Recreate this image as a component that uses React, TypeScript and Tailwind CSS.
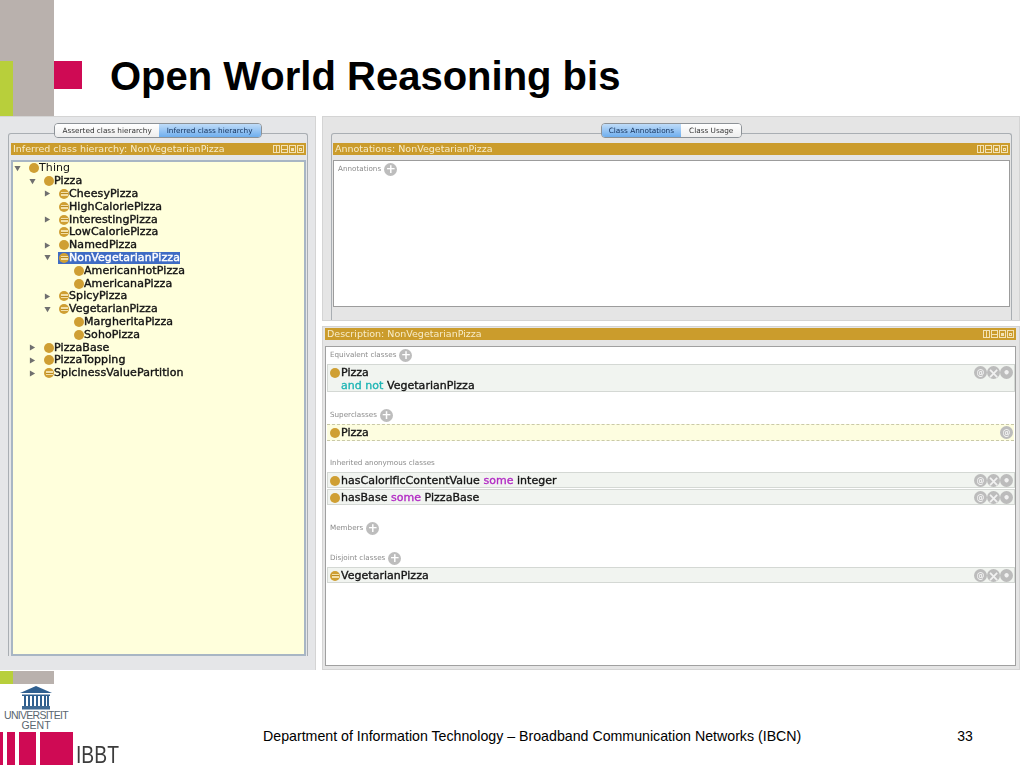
import React from "react";

const UI = "font-['DejaVu_Sans',sans-serif]";

function ClassIcon({ equiv = false }: { equiv?: boolean }) {
  return (
    <span className="relative flex h-[10px] w-[10px] shrink-0 items-center justify-center rounded-full bg-[#cf9f33]">
      {equiv && (
        <span className="flex h-[4px] w-[7px] items-center bg-[#f2dfa8]">
          <span className="h-[1px] w-full bg-[#b98a20]" />
        </span>
      )}
    </span>
  );
}

function Arrow({ dir }: { dir: "right" | "down" }) {
  return (
    <svg width="7" height="7" viewBox="0 0 8 8" className="shrink-0">
      {dir === "right" ? <path d="M1 0.5 L7 4 L1 7.5 Z" fill="#6f6f6f" /> : <path d="M0.5 1 L7.5 1 L4 7 Z" fill="#6f6f6f" />}
    </svg>
  );
}

type Node = { t: string; l: number; a?: "right" | "down"; e?: boolean; sel?: boolean; thin?: boolean };
const tree: Node[] = [
  { t: "Thing", l: 0, a: "down", thin: true },
  { t: "Pizza", l: 1, a: "down" },
  { t: "CheesyPizza", l: 2, a: "right", e: true },
  { t: "HighCaloriePizza", l: 2, e: true },
  { t: "InterestingPizza", l: 2, a: "right", e: true },
  { t: "LowCaloriePizza", l: 2, e: true },
  { t: "NamedPizza", l: 2, a: "right" },
  { t: "NonVegetarianPizza", l: 2, a: "down", e: true, sel: true },
  { t: "AmericanHotPizza", l: 3 },
  { t: "AmericanaPizza", l: 3 },
  { t: "SpicyPizza", l: 2, a: "right", e: true },
  { t: "VegetarianPizza", l: 2, a: "down", e: true },
  { t: "MargheritaPizza", l: 3 },
  { t: "SohoPizza", l: 3 },
  { t: "PizzaBase", l: 1, a: "right" },
  { t: "PizzaTopping", l: 1, a: "right" },
  { t: "SpicinessValuePartition", l: 1, a: "right", e: true },
];

const indent: Record<number, string> = { 0: "pl-[1px]", 1: "pl-[16px]", 2: "pl-[31px]", 3: "pl-[46px]" };

function TreeRow({ n }: { n: Node }) {
  return (
    <div className={`flex h-[12.8px] items-center ${indent[n.l]}`}>
      <span className="flex w-[11px] shrink-0 items-center">{n.a && <Arrow dir={n.a} />}</span>
      <span className={`flex items-center ${n.sel ? "ml-[3px] bg-[#3f6cc4] pl-[1px] text-white" : "ml-[4px] text-[#141414]"}`}>
        <ClassIcon equiv={n.e} />
        <span className={`text-[11px] leading-[12px] tracking-[0.1px] ${n.thin ? "font-normal" : "[-webkit-text-stroke:0.4px_currentColor]"}`}>{n.t}</span>
      </span>
    </div>
  );
}

function ViewButtons() {
  return (
    <span className="flex gap-[1px]">
      {[0, 1, 2, 3].map((i) => (
        <span key={i} className="flex h-[8px] w-[7px] items-center justify-center border border-[#f3e2b4]">
          {i === 0 && <span className="h-full w-[1px] bg-[#f3e2b4]" />}
          {i === 1 && <span className="h-[1px] w-full bg-[#f3e2b4]" />}
          {i === 2 && <span className="h-[3px] w-[3px] bg-[#f3e2b4]" />}
          {i === 3 && <span className="h-[3px] w-[3px] border border-[#f3e2b4]" />}
        </span>
      ))}
    </span>
  );
}

function GoldBar({ title }: { title: string }) {
  return (
    <div className="flex h-[12px] shrink-0 items-center justify-between bg-[#cb9c2c] pl-[2px] pr-[2px]">
      <span className="text-[9.5px] leading-[12px] text-[#f7ecc9]">{title}</span>
      <ViewButtons />
    </div>
  );
}

function Tabs({ a, b, active }: { a: string; b: string; active: 0 | 1 }) {
  const on = "bg-gradient-to-b from-[#bfdcf8] to-[#6eaeee] text-[#12305a]";
  const off = "bg-gradient-to-b from-[#ffffff] to-[#eeeeee] text-[#333333]";
  return (
    <div className="relative z-10 mx-auto flex h-[15px] w-fit overflow-hidden rounded-[4px] border border-[#8d9297] text-[7.3px] leading-[13px]">
      <span className={`px-[7px] ${active === 0 ? on : off}`}>{a}</span>
      <span className={`px-[8px] ${active === 1 ? on : off}`}>{b}</span>
    </div>
  );
}

function PlusLabel({ label }: { label: string }) {
  return (
    <div className="flex h-[14px] items-center gap-[3px] pl-[4px]">
      <span className="text-[7.2px] text-[#8b8b8b]">{label}</span>
      <span className="flex h-[13px] w-[13px] items-center justify-center rounded-full bg-[#bdbdbd] text-[12px] font-bold leading-none text-white">+</span>
    </div>
  );
}

function Btn({ g, size }: { g: string; size: string }) {
  return (
    <span className={`flex h-[13px] w-[13px] items-center justify-center rounded-full bg-[#bcbcbc] font-bold leading-none text-[#f1f1f1] ${size}`}>{g}</span>
  );
}

function RowText({ parts }: { parts: [string, string?][] }) {
  return (
    <span className="whitespace-pre pl-[1px] text-[11px] leading-[13px] tracking-[0.03px] text-[#141414] [-webkit-text-stroke:0.35px_currentColor]">
      {parts.map(([t, c], i) => (
        <span key={i} className={c}>{t}</span>
      ))}
    </span>
  );
}

function FrameRow({ children, two, equiv }: { children: React.ReactNode; two?: React.ReactNode; equiv?: boolean }) {
  return (
    <div className="ml-[1px] flex items-start justify-between border border-[#d4d8d4] bg-[#f1f4f0] pl-[2px] pr-[1px] pt-[1px]">
      <div className="flex flex-col">
        <div className="flex h-[13px] items-center">
          <ClassIcon equiv={equiv} />
          {children}
        </div>
        {two && <div className="flex h-[12px] items-center pl-[10px]">{two}</div>}
      </div>
      <span className="flex">
        <Btn g="@" size="text-[8px]" />
        <Btn g="×" size="text-[14px]" />
        <Btn g="•" size="text-[12px]" />
      </span>
    </div>
  );
}

export default function App() {
  return (
    <div className="flex h-[768px] w-[1024px] flex-col overflow-hidden bg-white font-['Liberation_Sans',sans-serif]">
      {/* Slide title */}
      <header className="flex h-[116px] shrink-0">
        <div className="flex w-[54px] flex-col justify-end bg-[#b9b1ad]">
          <div className="h-[55px] w-[13px] bg-[#b8cf3b]" />
        </div>
        <div className="mt-[61px] h-[28px] w-[28px] bg-[#cf0a54]" />
        <h1 className="ml-[28px] mt-[53px] text-[40px] font-bold leading-[46px] text-black">Open World Reasoning bis</h1>
      </header>

      {/* Application screenshot */}
      <main className={`flex h-[554px] shrink-0 gap-[6px] bg-white blur-[0.35px] ${UI}`}>
        <section className="flex w-[316px] flex-col border-r border-t border-[#d4d4d4] bg-[#e5e6e8] pl-[8px] pr-[7px] pt-[6px]">
          <div className="-mb-[5px]">
            <Tabs a="Asserted class hierarchy" b="Inferred class hierarchy" active={1} />
          </div>
          <div className="flex h-[523px] flex-col rounded-t-[3px] border-x border-t border-[#a9aeb3] pl-[2px] pr-[1px] pt-[9px]">
            <GoldBar title="Inferred class hierarchy: NonVegetarianPizza" />
            <div className="mt-[5px] flex-1 border-2 border-[#a8b6c4] bg-[#ffffdc]">
              {tree.map((n) => (
                <TreeRow key={n.t} n={n} />
              ))}
            </div>
          </div>
        </section>

        <section className="flex flex-1 flex-col pr-[4px]">
          <div className="flex h-[205px] shrink-0 flex-col border border-[#d4d4d4] bg-[#e5e5e5] pl-[8px] pr-[7px] pt-[6px]">
            <div className="-mb-[5px]">
              <Tabs a="Class Annotations" b="Class Usage" active={0} />
            </div>
            <div className="flex flex-1 flex-col rounded-t-[3px] border-x border-t border-[#a9aeb3] px-[1px] pt-[9px]">
              <GoldBar title="Annotations: NonVegetarianPizza" />
              <div className="mb-[13px] mt-[5px] flex-1 border border-[#9c9c9c] bg-white pt-[1px]">
                <PlusLabel label="Annotations" />
              </div>
            </div>
          </div>

          <div className="mt-[5px] flex flex-1 flex-col border border-[#d4d4d4] bg-[#e5e5e5] pb-[3px] pl-[2px] pr-[3px] pt-[1px]">
            <GoldBar title="Description: NonVegetarianPizza" />
            <div className="mt-[6px] flex-1 border border-[#a0a0a0] bg-white pt-[1px]">
              <PlusLabel label="Equivalent classes" />
              <div className="mt-[2px]">
                <FrameRow two={<RowText parts={[["and not ", "text-[#1fb5b5]"], ["VegetarianPizza"]]} />}>
                  <RowText parts={[["Pizza"]]} />
                </FrameRow>
              </div>
              <div className="mt-[16px]">
                <PlusLabel label="Superclasses" />
              </div>
              <div className="mx-[1px] mt-[2px] flex h-[17px] items-center justify-between border-y border-dashed border-[#c9c9a8] bg-[#fdfde0] pl-[3px]">
                <span className="flex items-center">
                  <ClassIcon />
                  <RowText parts={[["Pizza"]]} />
                </span>
                <span className="flex pr-[1px]">
                  <Btn g="@" size="text-[8px]" />
                </span>
              </div>
              <div className="mt-[15px]">
                <div className="flex h-[14px] items-center pl-[4px] text-[7.2px] text-[#8b8b8b]">Inherited anonymous classes</div>
              </div>
              <div className="mt-[2px]">
                <FrameRow>
                  <RowText parts={[["hasCalorificContentValue "], ["some ", "text-[#b22bc4]"], ["integer"]]} />
                </FrameRow>
              </div>
              <div className="mt-[1px]">
                <FrameRow>
                  <RowText parts={[["hasBase "], ["some ", "text-[#b22bc4]"], ["PizzaBase"]]} />
                </FrameRow>
              </div>
              <div className="mt-[16px]">
                <PlusLabel label="Members" />
              </div>
              <div className="mt-[16px]">
                <PlusLabel label="Disjoint classes" />
              </div>
              <div className="mt-[2px]">
                <FrameRow equiv>
                  <RowText parts={[["VegetarianPizza"]]} />
                </FrameRow>
              </div>
            </div>
          </div>
        </section>
      </main>

      {/* Slide footer */}
      <footer className="relative flex flex-1 items-start">
        <div className="flex w-[263px] shrink-0 flex-col">
          <div className="mt-[1px] flex h-[13px] w-[54px]">
            <div className="w-[13px] bg-[#b8cf3b]" />
            <div className="flex-1 bg-[#b9b1ad]" />
          </div>
          <div className="flex w-[72px] flex-col items-center pt-[1px]">
            <svg width="34" height="25" viewBox="0 0 34 25">
              <path d="M1 8 L17 1 L33 8 Z" fill="#2f5f8f" />
              <path d="M3 9.5 H31 V11 H3 Z" fill="#2f5f8f" />
              <path d="M6 11 V21 M10 11 V21 M14 11 V21 M18 11 V21 M22 11 V21 M26 11 V21 M29 11 V21" stroke="#2f5f8f" strokeWidth="2" />
              <path d="M3 21 H31 V24.5 H3 Z" fill="#3f6a94" />
            </svg>
            <span className="text-[10.5px] leading-[10px] tracking-[-0.7px] text-[#5a6670]">UNIVERSITEIT</span>
            <span className="text-[10.5px] leading-[10px] text-[#5a6670]">GENT</span>
          </div>
          <div className="mt-[2px] flex items-end">
            <div className="flex h-[33px] gap-[4px]">
              <div className="w-[3px] bg-[#cf0a54]" />
              <div className="w-[8px] bg-[#cf0a54]" />
              <div className="w-[17px] bg-[#cf0a54]" />
              <div className="w-[33px] bg-[#cf0a54]" />
            </div>
            <span className="ml-[3px] origin-left scale-x-[0.84] text-[23px] leading-[20px] text-[#3c3c3c]">IBBT</span>
          </div>
        </div>
        <p className="mt-[58px] text-[14.2px] leading-[16px] text-black">Department of Information Technology – Broadband Communication Networks (IBCN)</p>
        <span className="ml-[156px] mt-[58px] text-[14px] leading-[16px] text-black">33</span>
      </footer>
    </div>
  );
}
